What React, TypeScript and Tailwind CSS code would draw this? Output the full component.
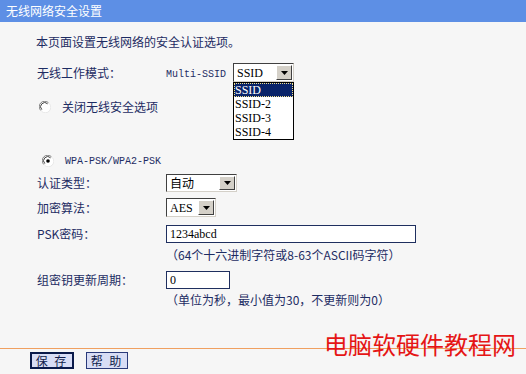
import type { ReactNode } from "react";

const cjk = "font-['Noto_Sans_CJK_SC',sans-serif]";
const mono = "font-['Liberation_Mono',monospace]";
const serif = "font-['Liberation_Serif',serif]";
const navy = "text-[#1d2c63]";

function Arrow() {
  return (
    <div className="flex h-full w-[16px] items-center justify-center border border-t-white border-l-white border-r-[#404040] border-b-[#404040] bg-[#d4d0c8]">
      <svg width="7" height="4" viewBox="0 0 7 4">
        <polygon points="0,0 7,0 3.5,4" fill="#000" />
      </svg>
    </div>
  );
}

function FakeSelect({ className, children }: { className: string; children: ReactNode }) {
  return (
    <div
      className={`flex items-stretch border border-t-[#404040] border-l-[#404040] border-r-[#d4d0c8] border-b-[#d4d0c8] bg-white p-[1px] ${className}`}
    >
      <div className="flex flex-1 items-center pl-[2px] text-black">{children}</div>
      <Arrow />
    </div>
  );
}

function Radio({ checked }: { checked?: boolean }) {
  return (
    <svg width="12" height="12" viewBox="0 0 12 12" className="shrink-0">
      <circle cx="6" cy="6" r="5.5" fill="#fff" />
      <path d="M1.8 9.5 A5 5 0 0 1 9.5 1.8" stroke="#808080" strokeWidth="1" fill="none" />
      <path d="M2.8 8.6 A3.8 3.8 0 0 1 8.6 2.8" stroke="#404040" strokeWidth="1" fill="none" />
      <path d="M10.2 2.5 A5 5 0 0 1 2.5 10.2" stroke="#e8e8e8" strokeWidth="1" fill="none" />
      {checked && <circle cx="6" cy="6" r="1.8" fill="#000" />}
    </svg>
  );
}

function Row({ label, top, children }: { label: string; top: string; children: ReactNode }) {
  return (
    <div className={`flex items-center pl-[37px] ${top}`}>
      <div className={`w-[129px] text-[12px] leading-[16px] ${navy}`}>{label}</div>
      {children}
    </div>
  );
}

export default function App() {
  const ssids = ["SSID", "SSID-2", "SSID-3", "SSID-4"];

  return (
    <div className={`relative flex h-[374px] w-[526px] flex-col overflow-hidden bg-[#f6f6f6] ${cjk}`}>
      <div className="flex h-[22px] items-center bg-[#5d8fe5] pl-[6px] text-[12px] text-white">
        无线网络安全设置
      </div>

      <div className={`mt-[12px] h-[16px] pl-[36px] text-[12px] leading-[16px] ${navy}`}>
        本页面设置无线网络的安全认证选项。
      </div>

      <div className="mt-[13px] flex h-[19px] items-center pl-[37px]">
        <div className={`w-[129px] text-[12px] leading-[16px] ${navy}`}>无线工作模式：</div>
        <span className={`w-[67px] translate-y-[2px] text-[10px] ${mono} ${navy}`}>Multi-SSID</span>
        <div className="relative">
          <FakeSelect className="h-[19px] w-[61px]">
            <span className={`text-[12px] ${serif}`}>SSID</span>
          </FakeSelect>
          <div className="absolute left-0 top-[19px] z-10 w-[61px] border border-black bg-white">
            {ssids.map((s, i) => (
              <div
                key={s}
                className={`flex h-[14px] items-center pl-[1px] text-[12px] ${serif} ${
                  i === 0 ? "bg-[#0a246a] text-white outline-1 outline-dotted outline-offset-[-1px] outline-[#f2e08a]" : "text-black"
                }`}
              >
                {s}
              </div>
            ))}
          </div>
        </div>
      </div>

      <div className="mt-[17px] flex h-[16px] items-center gap-[11px] pl-[39px]">
        <Radio />
        <span className={`text-[12px] ${navy}`}>关闭无线安全选项</span>
      </div>

      <div className="mt-[38px] flex h-[16px] items-center gap-[11px] pl-[42px]">
        <Radio checked />
        <span className={`text-[10px] ${mono} ${navy}`}>WPA-PSK/WPA2-PSK</span>
      </div>

      <Row label="认证类型：" top="mt-[5px]">
        <FakeSelect className="h-[18px] w-[71px]">
          <span className="text-[12px]">自动</span>
        </FakeSelect>
      </Row>

      <Row label="加密算法：" top="mt-[6px]">
        <FakeSelect className="h-[19px] w-[50px]">
          <span className={`text-[12px] ${serif}`}>AES</span>
        </FakeSelect>
      </Row>

      <Row label="PSK密码：" top="mt-[8px]">
        <div className="flex h-[18px] w-[250px] items-center border border-[#1f2f5f] bg-white pl-[3px]">
          <span className={`text-[12px] text-black ${serif}`}>1234abcd</span>
        </div>
      </Row>

      <div className={`mt-[4px] h-[16px] pl-[166px] text-[12px] leading-[16px] ${navy}`}>
        （64个十六进制字符或8-63个ASCII码字符）
      </div>

      <Row label="组密钥更新周期：" top="mt-[8px]">
        <div className="flex h-[18px] w-[64px] items-center border border-[#1f2f5f] bg-white pl-[3px]">
          <span className={`text-[12px] text-black ${serif}`}>0</span>
        </div>
      </Row>

      <div className={`mt-[3px] h-[16px] pl-[166px] text-[12px] leading-[16px] ${navy}`}>
        （单位为秒，最小值为30，不更新则为0）
      </div>

      <div className="mt-[40px] h-[1px] w-full bg-[#f0a060]" />

      <div className="mt-[3px] flex items-center gap-[12px] pl-[30px]">
        <button className="flex h-[17px] w-[44px] items-center justify-center border-2 border-[#0a1a4a] bg-[#d8ddf5] text-[12px] tracking-[2px] text-[#101c4a]">
          保 存
        </button>
        <button className="flex h-[17px] w-[42px] items-center justify-center border border-[#2a3a7a] bg-[#d8ddf5] text-[12px] tracking-[2px] text-[#101c4a]">
          帮 助
        </button>
      </div>

      <div className="absolute left-[324px] top-[328px] text-[24px] leading-[32px] text-[#e51515]">
        电脑软硬件教程网
      </div>
    </div>
  );
}
